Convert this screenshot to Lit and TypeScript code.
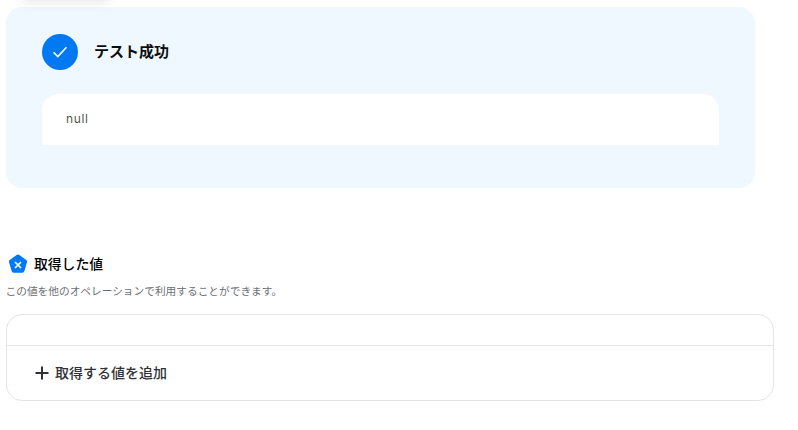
import { LitElement, html, css } from 'lit';
import { customElement } from 'lit/decorators.js';

@customElement('app-root')
export class AppRoot extends LitElement {
  static styles = css`
    :host {
      display: block;
      width: 798px;
      height: 430px;
      overflow: hidden;
      position: relative;
      background: #fff;
      font-family: 'Noto Sans', 'Noto Sans CJK JP', sans-serif;
    }

    .page {
      display: flex;
      flex-direction: column;
      padding: 7px 24px 0 6px;
    }

    /* leftover of a floating element, cut by the top of the page */
    .shadow {
      position: absolute;
      left: 24px;
      top: -22px;
      width: 84px;
      height: 22px;
      box-shadow: 0 2px 12px rgba(0, 0, 0, 0.1);
    }

    .result {
      width: 749px;
      height: 181px;
      box-sizing: border-box;
      padding: 27px 36px 0;
      background: #eff7ff;
      border-radius: 16px;
    }

    .result-head {
      display: flex;
      align-items: center;
      gap: 16px;
      height: 36px;
    }

    .check {
      width: 36px;
      height: 36px;
      border-radius: 50%;
      background: #0079f2;
      display: flex;
      align-items: center;
      justify-content: center;
    }

    .result-title {
      padding-bottom: 4px;
      font-family: 'Noto Sans CJK JP', sans-serif;
      font-size: 15px;
      font-weight: 700;
      color: #0c0c0c;
    }

    .output {
      margin-top: 24px;
      height: 51px;
      box-sizing: border-box;
      padding: 16px 24px 0;
      background: #fff;
      border-radius: 16px 16px 0 0;
      font-family: 'Inter', sans-serif;
      font-size: 12px;
      line-height: 18px;
      letter-spacing: 0.6px;
      color: #555;
    }

    .values {
      margin-top: 65px;
    }

    .values-head {
      display: flex;
      align-items: center;
      gap: 6px;
      height: 22px;
      padding-left: 2px;
    }

    .values-title {
      padding-bottom: 2px;
      font-family: 'Noto Sans CJK JP', sans-serif;
      font-size: 13.8px;
      font-weight: 500;
      line-height: 20px;
      color: #000;
    }

    .values-note {
      margin-top: 8px;
      margin-left: -0.5px;
      font-family: 'Noto Sans CJK JP', sans-serif;
      font-size: 10.7px;
      line-height: 16px;
      color: #6b6f75;
    }

    .table {
      margin-top: 15px;
      width: 768px;
      height: 87px;
      box-sizing: border-box;
      border: 1px solid #e4e4e4;
      border-radius: 16px;
    }

    .table-empty {
      height: 30px;
      border-bottom: 1px solid #e4e4e4;
    }

    .add {
      display: flex;
      align-items: center;
      gap: 5px;
      height: 54px;
      padding-left: 27px;
      font-family: 'Noto Sans CJK JP', sans-serif;
      font-size: 14px;
      font-weight: 500;
      color: #2f3136;
    }

    .add span {
      padding-bottom: 2px;
    }
  `;

  render() {
    return html`
      <div class="shadow"></div>
      <div class="page">
        <section class="result">
          <div class="result-head">
            <div class="check">
              <svg width="16" height="16" viewBox="0 0 16 16" fill="none">
                <path d="M1.5 8.2 L5.8 12.5 L14.5 3.2" stroke="#fff" stroke-width="1.6" />
              </svg>
            </div>
            <div class="result-title">テスト成功</div>
          </div>
          <div class="output">null</div>
        </section>

        <section class="values">
          <div class="values-head">
            <svg width="20" height="20" viewBox="0 0 20 20">
              <path
                d="M8.6 1 Q10 0.2 11.4 1 L18.2 6 Q19.4 6.9 19 8.3 L16.4 17 Q15.9 18.8 14.4 18.8 L5.6 18.8 Q4.1 18.8 3.6 17 L1 8.3 Q0.6 6.9 1.8 6 Z"
                fill="#0079f2"
              />
              <path d="M7 8 L13 14 M13 8 L7 14" stroke="#fff" stroke-width="1.7" />
            </svg>
            <div class="values-title">取得した値</div>
          </div>
          <div class="values-note">この値を他のオペレーションで利用することができます。</div>
          <div class="table">
            <div class="table-empty"></div>
            <div class="add">
              <svg width="16" height="16" viewBox="0 0 16 16" fill="none">
                <path d="M8 1.5 V14.5 M1.5 8 H14.5" stroke="#2f3136" stroke-width="2" />
              </svg>
              <span>取得する値を追加</span>
            </div>
          </div>
        </section>
      </div>
    `;
  }
}
